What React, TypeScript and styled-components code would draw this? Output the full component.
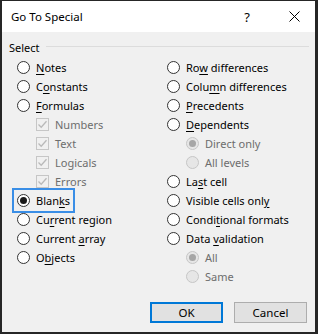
import React from "react";
import styled, { createGlobalStyle, css } from "styled-components";

type Option = {
    label: string;
    key?: string;
    kind: "radio" | "check";
    indent?: boolean;
    disabled?: boolean;
    checked?: boolean;
    focused?: boolean;
};

const leftOptions: Option[] = [
    { label: "Notes", key: "N", kind: "radio" },
    { label: "Constants", key: "o", kind: "radio" },
    { label: "Formulas", key: "F", kind: "radio" },
    { label: "Numbers", kind: "check", indent: true, disabled: true, checked: true },
    { label: "Text", kind: "check", indent: true, disabled: true, checked: true },
    { label: "Logicals", kind: "check", indent: true, disabled: true, checked: true },
    { label: "Errors", kind: "check", indent: true, disabled: true, checked: true },
    { label: "Blanks", key: "k", kind: "radio", checked: true, focused: true },
    { label: "Current region", key: "r", kind: "radio" },
    { label: "Current array", key: "a", kind: "radio" },
    { label: "Objects", key: "b", kind: "radio" },
];

const rightOptions: Option[] = [
    { label: "Row differences", key: "w", kind: "radio" },
    { label: "Column differences", key: "m", kind: "radio" },
    { label: "Precedents", key: "P", kind: "radio" },
    { label: "Dependents", key: "D", kind: "radio" },
    { label: "Direct only", kind: "radio", indent: true, disabled: true, checked: true },
    { label: "All levels", kind: "radio", indent: true, disabled: true },
    { label: "Last cell", key: "s", kind: "radio" },
    { label: "Visible cells only", key: "y", kind: "radio" },
    { label: "Conditional formats", key: "t", kind: "radio" },
    { label: "Data validation", key: "v", kind: "radio" },
    { label: "All", kind: "radio", indent: true, disabled: true, checked: true },
    { label: "Same", kind: "radio", indent: true, disabled: true },
];

// underline the first occurrence of the access key
const renderLabel = (label: string, key?: string) => {
    if (!key) return label;
    const i = label.indexOf(key);
    if (i < 0) return label;
    return (
        <>
            {label.slice(0, i)}
            <AccessKey>{label[i]}</AccessKey>
            {label.slice(i + 1)}
        </>
    );
};

const OptionRow: React.FC<{ option: Option }> = ({ option }) => (
    <Row $indent={option.indent}>
        <Item $disabled={option.disabled} $focused={option.focused}>
            {option.kind === "radio" ? (
                <Radio $disabled={option.disabled}>
                    {option.checked && <Dot $disabled={option.disabled} />}
                </Radio>
            ) : (
                <CheckBox $disabled={option.disabled}>
                    {option.checked && (
                        <svg width="11" height="11" viewBox="0 0 11 11">
                            <path
                                d="M1.5 5.5 L4.2 8.2 L9.5 2.2"
                                fill="none"
                                stroke="#b9b9b9"
                                strokeWidth="1.3"
                            />
                        </svg>
                    )}
                </CheckBox>
            )}
            <span>{renderLabel(option.label, option.key)}</span>
        </Item>
    </Row>
);

const App: React.FC = () => {
    return (
        <>
            <GlobalStyle />

            <Dialog>
                <TitleBar>
                    <Title>Go To Special</Title>
                    <Help>?</Help>
                    <Close>
                        <svg width="11" height="11" viewBox="0 0 11 11">
                            <path d="M0.5 0.5 L10.5 10.5 M10.5 0.5 L0.5 10.5" stroke="#000" strokeWidth="1" />
                        </svg>
                    </Close>
                </TitleBar>

                <Body>
                    <GroupHeader>
                        <span>Select</span>
                        <Rule />
                    </GroupHeader>

                    <Columns>
                        <Column>
                            {leftOptions.map((o) => (
                                <OptionRow key={o.label} option={o} />
                            ))}
                        </Column>
                        <Column>
                            {rightOptions.map((o) => (
                                <OptionRow key={o.label + (o.indent ? "-sub" : "")} option={o} />
                            ))}
                        </Column>
                    </Columns>

                    <Footer>
                        <Button $primary>OK</Button>
                        <Button>Cancel</Button>
                    </Footer>
                </Body>
            </Dialog>
        </>
    );
};

const GlobalStyle = createGlobalStyle`
  body {
    margin: 0;
    background: #2b2b2b;
    font-family: "Noto Sans", "Open Sans", sans-serif;
    -webkit-font-smoothing: antialiased;
  }
`;

const Dialog = styled.div`
    width: 318px;
    height: 334px;
    box-sizing: border-box;
    display: flex;
    flex-direction: column;
    background: #f0f0f0;
    border-style: solid;
    border-color: #262626;
    border-width: 1px 3px 2px 2px;
    font-size: 11px;
    color: #000;
`;

const TitleBar = styled.div`
    height: 31px;
    flex: none;
    display: flex;
    align-items: center;
    background: #fff;
    padding-left: 9px;
`;

const Title = styled.div`
    flex: 1;
    font-size: 11.5px;
    padding-bottom: 1px;
`;

const Help = styled.div`
    width: 14px;
    font-size: 13px;
    text-align: center;
    margin-right: 35px;
`;

const Close = styled.div`
    width: 11px;
    height: 11px;
    display: flex;
    margin-right: 15px;
`;

const Body = styled.div`
    flex: 1;
    display: flex;
    flex-direction: column;
    padding: 7px 0 0;
`;

const GroupHeader = styled.div`
    height: 16px;
    display: flex;
    align-items: center;
    gap: 6px;
    padding: 0 6px 0 7px;
`;

const Rule = styled.div`
    flex: 1;
    height: 1px;
    background: #dcdcdc;
    margin-top: -1px;
`;

const Columns = styled.div`
    display: grid;
    grid-template-columns: 150px 1fr;
    padding: 3px 0 0 15px;
`;

const Column = styled.div`
    display: flex;
    flex-direction: column;
`;

const Row = styled.div<{ $indent?: boolean }>`
    height: 19px;
    display: flex;
    align-items: center;
    padding-left: ${(p) => (p.$indent ? "19px" : "0")};
`;

const Item = styled.div<{ $disabled?: boolean; $focused?: boolean }>`
    display: inline-flex;
    align-items: center;
    gap: 6px;
    height: 15px;
    white-space: nowrap;
    color: ${(p) => (p.$disabled ? "#6d6d6d" : "#000")};
    ${(p) =>
        p.$focused &&
        css`
            outline: 2px solid #3a8ee6;
            outline-offset: 3px;
        `}
`;

const Radio = styled.span<{ $disabled?: boolean }>`
    width: 13px;
    height: 13px;
    box-sizing: border-box;
    border-radius: 50%;
    flex: none;
    display: flex;
    align-items: center;
    justify-content: center;
    border: 1px solid ${(p) => (p.$disabled ? "#c6c6c6" : "#333")};
    background: ${(p) => (p.$disabled ? "#e6e6e6" : "#fff")};
`;

const Dot = styled.span<{ $disabled?: boolean }>`
    width: 7px;
    height: 7px;
    border-radius: 50%;
    background: ${(p) => (p.$disabled ? "#a6a6a6" : "#1a1a1a")};
`;

const CheckBox = styled.span<{ $disabled?: boolean }>`
    width: 13px;
    height: 13px;
    box-sizing: border-box;
    flex: none;
    display: flex;
    align-items: center;
    justify-content: center;
    border: 1px solid #c6c6c6;
    background: #f0f0f0;
`;

const AccessKey = styled.span`
    text-decoration: underline;
    text-underline-offset: 2px;
`;

const Footer = styled.div`
    margin-top: auto;
    display: flex;
    justify-content: flex-end;
    gap: 11px;
    padding: 0 8px 9px 0;
`;

const Button = styled.button<{ $primary?: boolean }>`
    width: 73px;
    height: 21px;
    box-sizing: border-box;
    padding: 0;
    font-family: inherit;
    font-size: 11.5px;
    color: #000;
    background: #e1e1e1;
    border: ${(p) => (p.$primary ? "2px solid #0078d7" : "1px solid #adadad")};
`;

export default App;
